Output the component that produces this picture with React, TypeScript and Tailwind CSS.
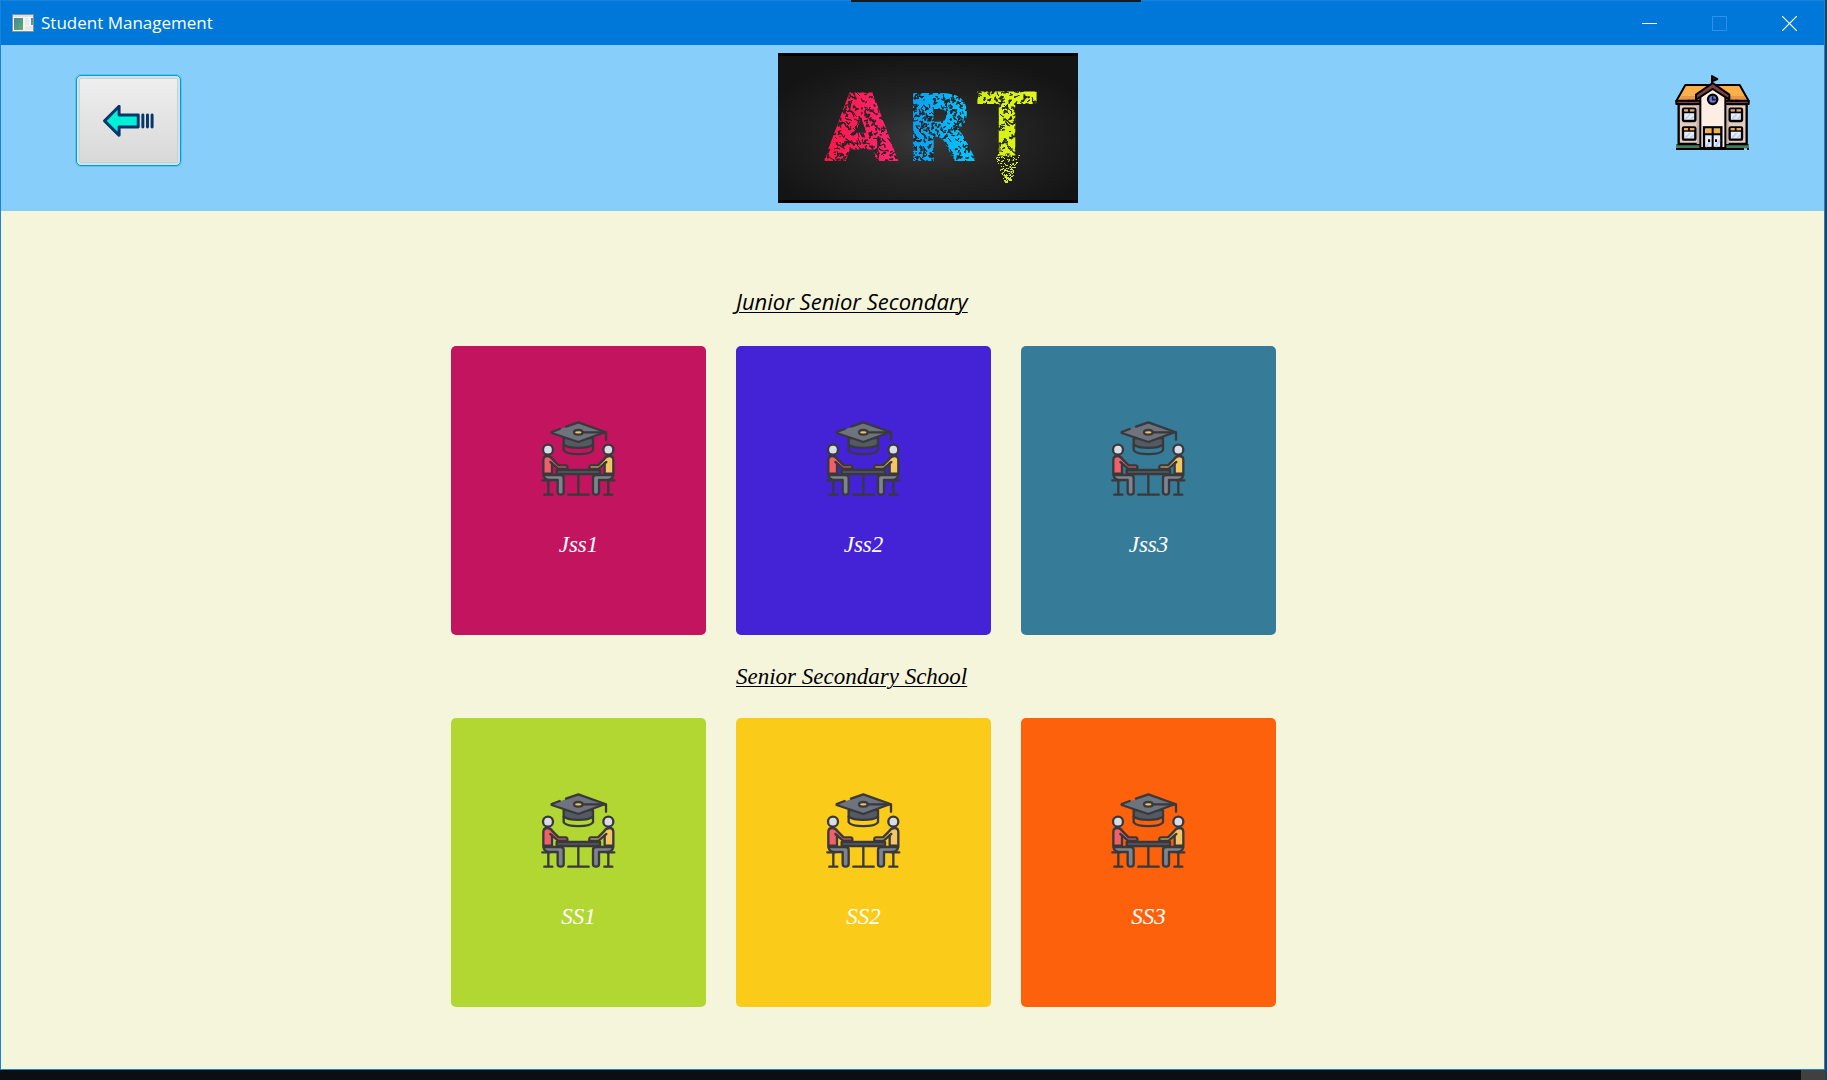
import React from "react";

const junior = [
  { name: "Jss1", color: "bg-[#c3145f]" },
  { name: "Jss2", color: "bg-[#4422d6]" },
  { name: "Jss3", color: "bg-[#367c99]" },
];
const senior = [
  { name: "SS1", color: "bg-[#b2d732]" },
  { name: "SS2", color: "bg-[#fbcb1a]" },
  { name: "SS3", color: "bg-[#fe610c]" },
];

function makeRandom(seed: number) {
  let s = seed;
  return () => {
    s = (s * 1664525 + 1013904223) % 4294967296;
    return s / 4294967296;
  };
}

const rand = makeRandom(41);
const range = (n: number) => Array.from({ length: n }, (_, i) => i);

// Jagged dark cuts that break each letter into small silhouettes.
const cuts = range(1500)
  .map(() => {
    const x = Math.round(38 + rand() * 225);
    const y = Math.round(32 + rand() * 85);
    const a = Math.round(rand() * 8 - 4);
    const b = Math.round(rand() * 8 - 4);
    const c = Math.round(rand() * 4 - 2);
    return `M${x} ${y}l${a} ${c}l${c} ${b}`;
  })
  .join("");

// Dust that falls from the foot of the T.
const dust = range(150)
  .map(() => {
    const t = rand();
    const spread = 13 * (1 - t * 0.8);
    const x = Math.round(229 + (rand() * 2 - 1) * spread);
    const y = Math.round(100 + t * 29);
    return `M${x} ${y}h${rand() > 0.6 ? 2 : 1}v1h-1z`;
  })
  .join("");

function SpeckleFill({ id, from, to, x1, x2 }: { id: string; from: string; to: string; x1: number; x2: number }) {
  return (
    <>
      <linearGradient id={id + "Tone"} gradientUnits="userSpaceOnUse" x1={x1} x2={x2} y1="0" y2="0">
        <stop offset="0" stopColor={from} />
        <stop offset="1" stopColor={to} />
      </linearGradient>
      <pattern id={id} patternUnits="userSpaceOnUse" width="300" height="150">
        <rect width="300" height="150" fill={`url(#${id}Tone)`} />
        <path d={cuts} stroke="#242424" strokeWidth="1" fill="#242424" />
      </pattern>
    </>
  );
}

function ArtBanner() {
  return (
    <svg viewBox="0 0 300 150" className="h-[150px] w-[300px] shrink-0" role="img" aria-label="ART">
      <defs>
        <radialGradient id="board" cx="0.5" cy="0.58" r="0.6">
          <stop offset="0" stopColor="#393939" />
          <stop offset="0.45" stopColor="#242424" />
          <stop offset="1" stopColor="#141414" />
        </radialGradient>
        <SpeckleFill id="pink" from="#ff1744" to="#ff2475" x1={42} x2={124} />
        <SpeckleFill id="cyan" from="#0c9cf0" to="#06c4fb" x1={132} x2={192} />
        <SpeckleFill id="lime" from="#d0f010" to="#e0f51c" x1={198} x2={258} />
      </defs>
      <rect width="300" height="150" fill="#000" />
      <rect y="3" width="300" height="144" fill="url(#board)" />
      <g fontFamily="DejaVu Sans" fontWeight="700" fontSize="88" textAnchor="middle">
        <text x="83" y="106" fill="url(#pink)" stroke="url(#pink)" strokeWidth="5">A</text>
        <text x="163" y="106" fill="url(#cyan)" stroke="url(#cyan)" strokeWidth="4">R</text>
        <text x="229" y="102" fill="url(#lime)">T</text>
      </g>
      <path d={dust} fill="#d8f21a" />
    </svg>
  );
}

function ArrowIcon() {
  return (
    <svg viewBox="309 313 153 97" className="h-8 w-[51px]" aria-hidden="true">
      <path d="M313 361 357 317V343H415V380H357V405Z" fill="#00f0d8" stroke="#06366a" strokeWidth="9" strokeLinejoin="round" />
      <path d="M429 343V380M443 343V380M457 343V380" stroke="#06366a" strokeWidth="9" strokeLinecap="round" />
    </svg>
  );
}

function SchoolIcon() {
  return (
    <svg viewBox="225 225 225 225" className="h-[75px] w-[75px]" role="img" aria-label="School">
      <path d="M228 432H447V445H228Z" fill="#3f7f5c" />
      <path d="M236 312H440V432H236Z" fill="#e3cdc0" stroke="#000" strokeWidth="7" />
      <path d="M290 312H302V432H290ZM374 312H386V432H374Z" fill="#c9b0a6" />
      <path d="M256 255H419L446 303H229Z" fill="#fbb04c" stroke="#000" strokeWidth="6" strokeLinejoin="round" />
      <path d="M243 288H290V299H238ZM386 288H434L439 299H386Z" fill="#e99645" />
      <path d="M229 302H446V312H229Z" fill="#7e4044" stroke="#000" strokeWidth="6" strokeLinejoin="round" />
      <path d="M262 302H283M392 302H414" stroke="#000" strokeWidth="6" strokeDasharray="8 5" />
      <path d="M301 444V290L338 261 376 290V444Z" fill="#fceee4" stroke="#000" strokeWidth="6" />
      <path d="M288 284 338 249 388 284V299L338 267 288 299Z" fill="#7e4044" stroke="#000" strokeWidth="6" strokeLinejoin="round" />
      <path d="M336 250V228L352 237 338 243" fill="#3a2a20" stroke="#000" strokeWidth="6" strokeLinejoin="round" />
      <circle cx="338" cy="298" r="14" fill="#7177d6" stroke="#000" strokeWidth="7" />
      <path d="M338 289V299H347" fill="none" stroke="#16163c" strokeWidth="5" />
      {[
        [249, 326],
        [249, 382],
        [389, 326],
        [389, 382],
      ].map(([x, y]) => (
        <g key={`${x}-${y}`}>
          <rect x={x} y={y} width="37" height="37" rx="3" fill="#e6edfb" stroke="#000" strokeWidth="7" />
          <path d={`M${x + 3} ${y + 5}h31`} stroke="#efa548" strokeWidth="6" />
          <path d={`M${x + 1} ${y + 11}h35M${x + 18} ${y + 1}v9`} stroke="#000" strokeWidth="5" />
          <path d={`M${x + 8} ${y + 31}l13-14M${x + 23} ${y + 32}l9-9`} stroke="#c2cbed" strokeWidth="5" />
        </g>
      ))}
      <rect x="312" y="382" width="52" height="62" fill="#e6edfb" stroke="#000" strokeWidth="7" />
      <path d="M316 386H360V401H316Z" fill="#f3b050" />
      <path d="M318 441 333 420M347 441 359 420" stroke="#c2cbed" strokeWidth="6" />
      <path d="M312 403H364M338 382V444" stroke="#000" strokeWidth="6" />
      <path d="M327 418v8M348 418v8" stroke="#000" strokeWidth="6" />
      <path d="M228 447H432M441 447H447" stroke="#000" strokeWidth="6" />
    </svg>
  );
}

function ClassIcon() {
  return (
    <svg viewBox="33 63 225 225" className="h-[75px] w-[75px]" aria-hidden="true">
      <g stroke="#39393b" strokeWidth="7" strokeLinecap="round" strokeLinejoin="round">
        <path d="M101 114V134C117 147 173 147 189 134V114Z" fill="#545a64" />
        <path d="M101 134V151C112 166 178 166 189 151V134" fill="none" />
        <path d="M145 67 226 97 145 126 64 98Z" fill="#6e737d" stroke="none" />
        <path d="M108 80 145 67 226 96 145 126 65 99 65 96 89 87" fill="none" />
        <path d="M158 97H228V119" fill="none" />
        <ellipse cx="145" cy="97" rx="13" ry="7" fill="#f3c35b" />

        <circle cx="54" cy="149" r="15" fill="#d9dbe6" />
        <path d="M40 221V180Q40 168 52 168Q62 168 68 178L86 196H108Q113 196 112 206H84L66 190V221Z" fill="#f0606b" />
        <path d="M66 190 61 186" fill="none" />
        <path d="M40 225H92Q101 225 101 234V276Q101 284 92 284T83 276V240H58Q43 239 40 225Z" fill="#7d838f" />
        <path d="M37 241H60M55 243V284M43 284H67" fill="none" />

        <circle cx="235" cy="149" r="15" fill="#d9dbe6" />
        <path d="M250 221V180Q250 168 238 168Q228 168 222 178L204 196H182Q177 196 178 206H206L224 190V221Z" fill="#f3c565" />
        <path d="M224 190 229 186" fill="none" />
        <path d="M250 225H198Q189 225 189 234V276Q189 284 198 284T207 276V240H232Q247 239 250 225Z" fill="#7d838f" />
        <path d="M253 241H230M235 243V284M223 284H247" fill="none" />

        <path d="M80 210H210V222H80Z" fill="#545a64" />
        <path d="M145 224V284M115 284H176" fill="none" />
      </g>
    </svg>
  );
}

function ClassCard({ name, color }: { name: string; color: string }) {
  return (
    <button
      type="button"
      className={`flex h-[289px] flex-col items-center rounded-[5px] pt-[75px] font-['Liberation_Serif'] text-[23px] leading-6 text-white italic ${color}`}
    >
      <ClassIcon />
      <span className="mt-[37px]">{name}</span>
    </button>
  );
}

function AppGlyph() {
  return (
    <svg viewBox="0 0 22 18" className="h-[18px] w-[22px]" aria-hidden="true">
      <defs>
        <linearGradient id="pane" x1="0" y1="0" x2="1" y2="1">
          <stop offset="0" stopColor="#4682a0" />
          <stop offset="1" stopColor="#60b070" />
        </linearGradient>
      </defs>
      <rect width="22" height="18" fill="#8a8f96" />
      <rect x="1" y="1" width="20" height="16" fill="#f4f5f6" />
      <path d="M1 1h20v2H1z" fill="#dcdfe3" />
      <rect x="2" y="4" width="9" height="12" fill="url(#pane)" />
      <path d="M13 4h4v7h-4zM13 12h8v4h-8z" fill="#e6e8ea" />
      <rect x="19" y="4" width="2" height="7" fill="url(#pane)" />
    </svg>
  );
}

export default function App() {
  return (
    <div className="relative flex min-h-screen flex-col bg-[#0b0f14] pr-0.5 pb-[10px]">
      <div className="absolute top-0 left-[851px] h-0.5 w-[290px] bg-[#171a20]" />
      <div className="absolute right-0 bottom-0 h-[10px] w-[26px] bg-[#404040]" />
      <div className="absolute top-0 right-0 h-full w-0.5 bg-[#2c3f50]" />
      <div className="flex grow flex-col border border-[#1a82da] bg-[#f5f5dc]">
        <div className="flex h-11 items-center justify-between bg-[#0078d9] pl-[11px] text-white">
          <div className="flex items-center gap-[7px]">
            <AppGlyph />
            <h1 className="font-['Open_Sans'] text-[17px] leading-6">Student Management</h1>
          </div>
          <div className="flex h-full">
            <button type="button" aria-label="Minimize" className="flex w-[70px] items-center justify-center">
              <svg viewBox="0 0 15 15" className="h-[15px] w-[15px]"><path d="M0 7.5h15" stroke="#fff" /></svg>
            </button>
            <button type="button" aria-label="Maximize" disabled className="flex w-[70px] items-center justify-center">
              <svg viewBox="0 0 15 15" className="h-[15px] w-[15px]"><path d="M.5.5h14v14H.5z" fill="none" stroke="#2f92e4" /></svg>
            </button>
            <button type="button" aria-label="Close" className="flex w-[70px] items-center justify-center">
              <svg viewBox="0 0 15 15" className="h-[15px] w-[15px]"><path d="M0 0l15 15M15 0L0 15" stroke="#fff" strokeWidth="1.2" /></svg>
            </button>
          </div>
        </div>
        <header className="flex items-start justify-between bg-[#87cefa] py-2 pr-[74px] pl-[75px]">
          <button
            type="button"
            aria-label="Back"
            className="mt-[22px] flex h-[91px] w-[105px] items-center justify-center rounded-[5px] border border-[#039ed3] bg-linear-to-b from-[#efefef] to-[#d8d8d8] shadow-[0_0_0_1px_#5fc0ec,inset_0_0_0_2px_#cfe4ea,inset_0_0_0_3px_#c3d3d8]"
          >
            <ArrowIcon />
          </button>
          <ArtBanner />
          <div className="mt-[22px]">
            <SchoolIcon />
          </div>
        </header>
        <main className="pt-[76px] pb-[62px] pl-[450px]">
          <div className="grid max-w-[825px] grid-cols-3 gap-[30px] text-black">
            <h2 className="col-span-2 col-start-2 font-['Open_Sans'] text-[22px] leading-[29px] italic underline decoration-1 underline-offset-2">
              Junior Senior Secondary
            </h2>
            {junior.map((c) => (
              <ClassCard key={c.name} {...c} />
            ))}
            <h2 className="col-span-2 col-start-2 font-['Liberation_Serif'] text-[23px] leading-[23px] italic underline decoration-1 underline-offset-2">
              Senior Secondary School
            </h2>
            {senior.map((c) => (
              <ClassCard key={c.name} {...c} />
            ))}
          </div>
        </main>
      </div>
    </div>
  );
}
